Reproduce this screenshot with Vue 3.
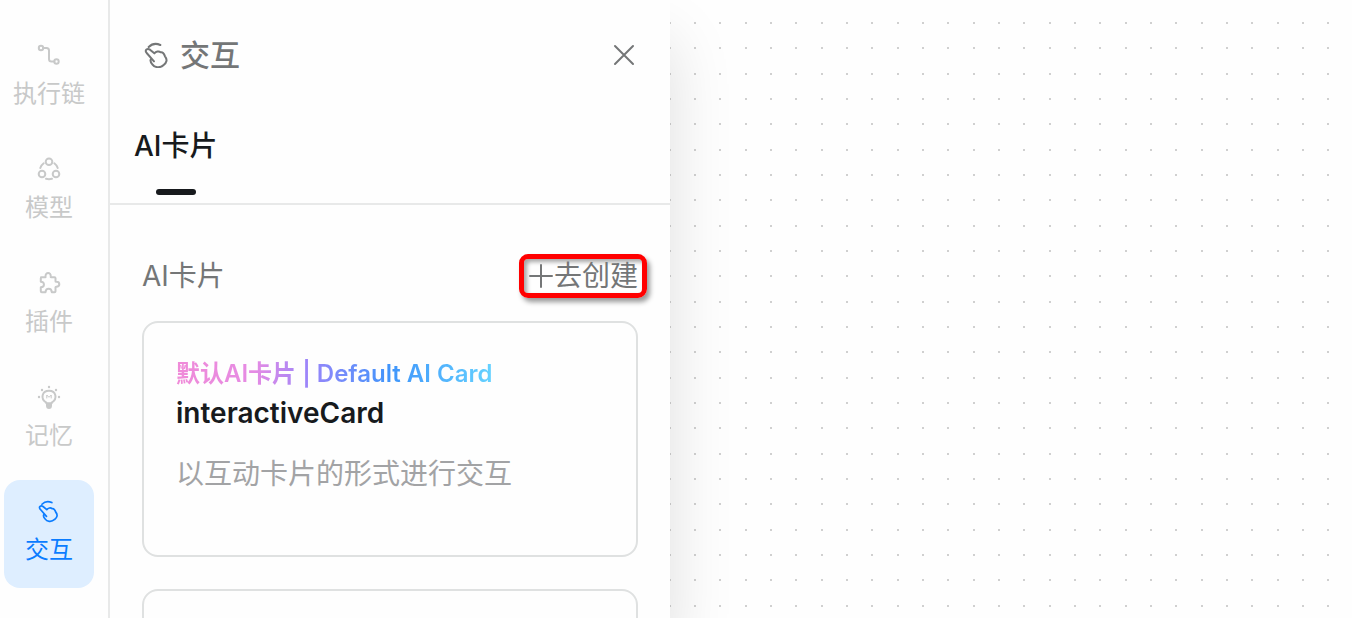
<script setup>
import { ref } from 'vue'

const active = ref('interact')

const items = [
  { id: 'chain', label: '执行链' },
  { id: 'model', label: '模型' },
  { id: 'plugin', label: '插件' },
  { id: 'memory', label: '记忆' },
  { id: 'interact', label: '交互' },
]

const steps = [0, 25, 51]
const dots = steps.flatMap((y) => steps.map((x) => ({ x, y })))
</script>

<template>
  <div class="app">
    <nav class="rail">
      <button
        v-for="item in items"
        :key="item.id"
        type="button"
        class="rail-item"
        :class="{ active: active === item.id }"
        @click="active = item.id"
      >
        <svg v-if="item.id === 'chain'" class="rail-icon" viewBox="0 0 24 24" aria-hidden="true">
          <circle cx="4" cy="5" r="2.2" />
          <circle cx="19.5" cy="18.5" r="2.2" />
          <path d="M6.2 5H9.5Q12 5 12 7.500V16Q12 18.500 14.500 18.500H17.300" />
        </svg>
        <svg v-else-if="item.id === 'model'" class="rail-icon" viewBox="0 0 24 24" aria-hidden="true">
          <circle cx="12" cy="4.700" r="3.300" />
          <circle cx="5" cy="17" r="3.300" />
          <circle cx="19" cy="17" r="3.300" />
          <path d="M6.700 6.300Q4 8.300 3.300 11M17.300 6.300Q20 8.300 20.700 11M9 21.800Q12 22.700 15 21.800" />
        </svg>
        <svg v-else-if="item.id === 'plugin'" class="rail-icon" viewBox="0 0 24 24" aria-hidden="true">
          <path d="M4 6.200H8.300C8.700 6.200 8.700 5.900 8.600 5.400C8 1 14.300 1 13.700 5.400C13.600 5.900 13.700 6.200 14.100 6.200H17.500Q18.500 6.200 18.500 7.200V10.300C18.500 10.800 18.900 10.800 19.300 10.800C23.300 10.800 23.300 15.700 19.300 15.700C18.900 15.700 18.500 15.800 18.500 16.300V20.200Q18.500 21.200 17.500 21.200H14.800C14.500 16.700 8.800 16.700 8.500 21.200H4.800Q3.800 21.200 3.800 20.200V16.300C8 16.300 8 10.700 3.800 10.700V7.200Q3.800 6.200 4.800 6.200" />
        </svg>
        <svg v-else-if="item.id === 'memory'" class="rail-icon bulb" viewBox="0 0 24 24" aria-hidden="true">
          <path d="M9.300 18.300V17.500C3 13.500 5 5.800 12 5.800S21 13.500 14.700 17.500V18.300Z" />
          <path class="thin" d="M9.800 13V10L12 12.300L14.200 10V13" />
          <path class="solid" d="M9 18.500H15V20.500Q15 24 12 24T9 20.500Z" />
          <g class="solid">
            <circle cx="12" cy="2" r="1.200" />
            <circle cx="5" cy="5" r="1.200" />
            <circle cx="19" cy="5" r="1.200" />
            <circle cx="2" cy="12" r="1.200" />
            <circle cx="22" cy="12" r="1.200" />
          </g>
        </svg>
        <svg v-else class="rail-icon hand" viewBox="0 0 78 78" aria-hidden="true">
          <path d="M30 58L8 33C1 24 10 18 18 23L31 34C36 28 45 26 50 31C55 29 60 34 63 43C71 53 68 62 59 69C47 80 31 76 25 67C19 60 18 54 22 50" />
          <path d="M14 15C25 4 38 4 49 9" />
        </svg>
        <span>{{ item.label }}</span>
      </button>
    </nav>

    <main class="canvas">
      <svg class="grid" aria-hidden="true">
        <defs>
          <pattern id="dot-grid" x="24" y="22" width="76" height="76" patternUnits="userSpaceOnUse">
            <rect v-for="(d, i) in dots" :key="i" :x="d.x" :y="d.y" width="2" height="2" fill="#d0d0d0" />
          </pattern>
        </defs>
        <rect width="100%" height="100%" fill="url(#dot-grid)" />
      </svg>
    </main>

    <aside class="panel">
      <header class="panel-head">
        <svg class="head-icon" viewBox="0 0 78 78" aria-hidden="true">
          <path d="M30 58L8 33C1 24 10 18 18 23L31 34C36 28 45 26 50 31C55 29 60 34 63 43C71 53 68 62 59 69C47 80 31 76 25 67C19 60 18 54 22 50" />
          <path d="M14 15C25 4 38 4 49 9" />
        </svg>
        <h1>交互</h1>
        <button type="button" class="close" aria-label="关闭">
          <svg viewBox="0 0 24 24" aria-hidden="true"><path d="M3 3L21 21M21 3L3 21" /></svg>
        </button>
      </header>

      <div class="tabs" role="tablist">
        <button type="button" class="tab" role="tab" aria-selected="true">AI卡片</button>
      </div>

      <section class="content">
        <div class="section-head">
          <h2>AI卡片</h2>
          <button type="button" class="create">
            <svg viewBox="0 0 26 28" aria-hidden="true"><path d="M2 14H24M13 3V25" /></svg>
            <span>去创建</span>
          </button>
        </div>

        <article class="card">
          <p class="card-tag"><span>默认AI卡片 | Default AI Card</span></p>
          <h3>interactiveCard</h3>
          <p class="card-desc">以互动卡片的形式进行交互</p>
        </article>
        <article class="card"></article>
      </section>
    </aside>
  </div>
</template>

<style>
body {
  margin: 0;
  background: #fefefe;
}
</style>

<style scoped>
.app {
  display: grid;
  grid-template-columns: 110px 560px 1fr;
  height: 100vh;
  overflow: hidden;
  box-sizing: border-box;
  background: #fefefe;
  color: #171a1d;
  font-family: Inter, "Noto Sans CJK SC", sans-serif;
}

h1,
h2,
h3,
p {
  margin: 0;
  font-weight: 400;
}

button {
  margin: 0;
  padding: 0;
  border: 0;
  background: none;
  color: inherit;
  font: inherit;
  cursor: pointer;
}

svg {
  fill: none;
  stroke: currentColor;
  stroke-linecap: round;
  stroke-linejoin: round;
}

.rail {
  z-index: 1;
  grid-column: 1;
  grid-row: 1;
  display: flex;
  flex-direction: column;
  gap: 6px;
  padding: 24px 14px 0 4px;
  border-right: 2px solid #e8e9e9;
  background: #fefefe;
}

.rail-item {
  display: flex;
  flex-direction: column;
  align-items: center;
  gap: 8px;
  height: 108px;
  flex-shrink: 0;
  box-sizing: border-box;
  padding-top: 19px;
  border-radius: 16px;
  color: #c8c9c9;
  font-size: 24px;
  line-height: 38px;
}

.rail-item.active {
  background: #deeeff;
  color: #0a7cff;
}

.rail-icon {
  width: 24px;
  height: 24px;
  stroke-width: 2;
}

.rail-icon.hand {
  width: 22px;
  height: 24px;
  stroke-width: 6;
}

.rail-icon .solid {
  fill: currentColor;
  stroke: none;
}

.rail-icon .thin {
  stroke-width: 1;
}

.canvas {
  grid-column: 3;
  grid-row: 1;
  min-width: 0;
  overflow: hidden;
}

.grid {
  display: block;
  width: 100%;
  height: 100%;
  stroke: none;
}

.panel {
  grid-column: 2;
  grid-row: 1;
  display: flex;
  flex-direction: column;
  min-height: 0;
  background: #fefefe;
  box-shadow: 0 40px 60px rgba(0, 0, 0, 0.13);
}

.panel-head {
  display: flex;
  align-items: center;
  flex-shrink: 0;
  height: 110px;
  padding: 0 34px;
  color: #747677;
}

.head-icon {
  width: 26px;
  height: 26px;
  margin-right: 10px;
  stroke-width: 6;
}

.panel-head h1 {
  font-size: 30px;
  font-weight: 500;
  line-height: 44px;
}

.close {
  display: flex;
  margin-left: auto;
}

.close svg {
  width: 24px;
  height: 24px;
  stroke-width: 2;
}

.tabs {
  display: flex;
  flex-shrink: 0;
  padding: 0 24px;
  border-bottom: 2px solid #e8e9e9;
}

.tab {
  display: flex;
  flex-direction: column;
  align-items: center;
  gap: 21px;
  padding: 14px 0 8px;
  font-size: 28px;
  font-weight: 500;
  line-height: 44px;
}

.tab::after {
  content: "";
  width: 40px;
  height: 6px;
  border-radius: 3px;
  background: #171a1d;
}

.content {
  display: flex;
  flex-direction: column;
  gap: 32px;
  padding: 49px 32px 0;
}

.section-head {
  display: flex;
  align-items: center;
  justify-content: space-between;
  margin-bottom: -9px;
  color: #747677;
  font-size: 28px;
  line-height: 34px;
}

.section-head h2 {
  font-size: 28px;
}

.create {
  display: flex;
  align-items: center;
  margin-right: -9px;
  padding: 0 4px;
  border: 5px solid #ff0000;
  border-radius: 9px;
  box-shadow:
    3px 4px 5px rgba(0, 0, 0, 0.4),
    inset 3px 3px 4px rgba(0, 0, 0, 0.35);
}

.create svg {
  width: 26px;
  height: 28px;
  stroke-width: 2;
}

.card {
  flex-shrink: 0;
  box-sizing: border-box;
  min-height: 236px;
  padding: 32px;
  border: 2px solid #dfe1e1;
  border-radius: 16px;
}

.card-tag {
  font-size: 24px;
  font-weight: 600;
  line-height: 38px;
}

.card-tag span {
  background: linear-gradient(90deg, #f08bd8 0%, #e58be4 25%, #9a85fa 42%, #3f95fb 68%, #65d2ff 100%);
  background-clip: text;
  -webkit-background-clip: text;
  color: transparent;
}

.card h3 {
  font-size: 28px;
  font-weight: 600;
  line-height: 40px;
}

.card-desc {
  margin-top: 19px;
  color: #a2a3a5;
  font-size: 28px;
  line-height: 44px;
}
</style>
